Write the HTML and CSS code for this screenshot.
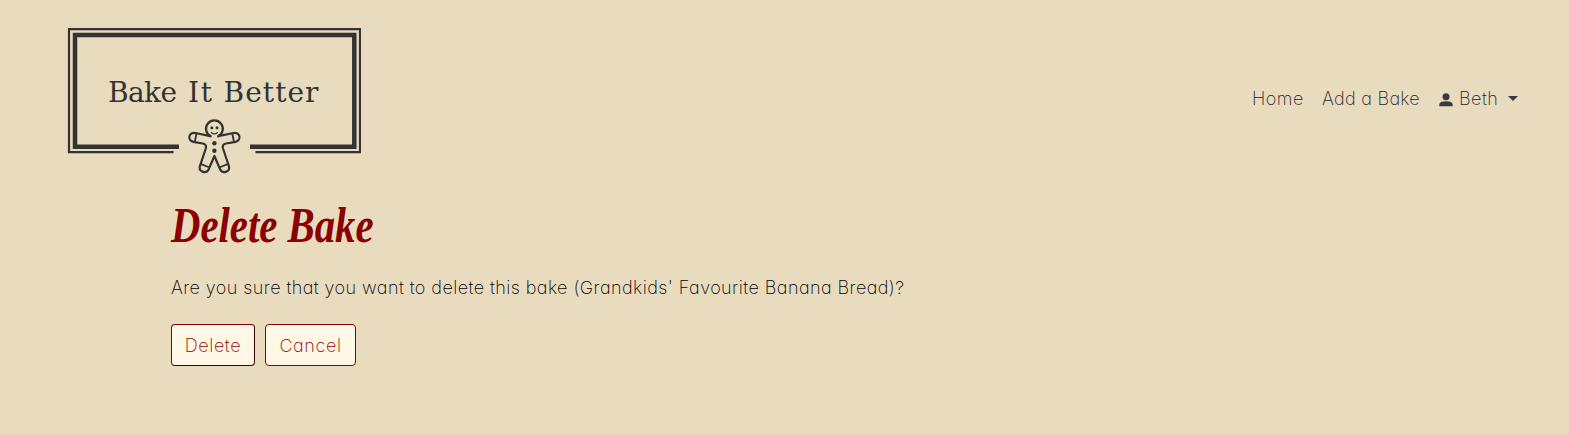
FILE: index.html
```html
<!DOCTYPE html>
<html lang="en">
<head>
<meta charset="utf-8">
<title>Bake It Better</title>
<link rel="stylesheet" href="styles.css">
</head>
<body>
<header class="navbar">
  <a class="brand" href="#" aria-label="Bake It Better">
    <svg class="logo" width="294" height="150" viewBox="67 27 294 150">
      <g fill="none" stroke="#333">
        <path stroke-width="2.200" d="M173.500 152.200H69V29.200H360V152.200H255.500"/>
        <path stroke-width="4.500" d="M179 146.700H75V35H354.300V146.700H250"/>
      </g>
      <g class="logo-text">
        <text x="108" y="101.500" textLength="69">Bake</text>
        <text x="188" y="101.500" textLength="24">It</text>
        <text x="223.500" y="101.500" textLength="95">Better</text>
      </g>
      <g fill="none" stroke="#333" stroke-width="2.200" stroke-linejoin="round" stroke-linecap="round">
        <path d="M210.500 136.200A8.400 8.400 0 1 1 218.300 136.200"/>
        <path d="M210.500 136.200L195.300 133C188.500 131.500 187 140.500 193.300 141.800L202.800 143.500C205.800 144 206.500 146 205.800 148.500L200.100 165.500C197.800 171.300 205.800 174.700 208.600 169.500L214.400 156L220.200 169.500C223 174.700 231 171.300 228.700 165.500L223 148.500C222.300 146 223 144 226 143.500L235.500 141.800C241.800 140.500 240.300 131.500 233.500 133L218.300 136.200"/>
        <path stroke-width="1.800" d="M196.500 133.500L194.900 141.500M232.300 133.500L233.900 141.500M201.200 164.200L208.300 167M227.600 164.200L220.500 167"/>
        <path stroke-width="1.100" d="M211.300 132.500Q214.400 135.200 217.500 132.500"/>
      </g>
      <g fill="#333">
        <circle cx="211.800" cy="127.700" r="1.500"/><circle cx="217" cy="127.700" r="1.500"/>
        <circle cx="214.400" cy="143.300" r="2.200"/><circle cx="214.400" cy="150.800" r="2.200"/>
      </g>
    </svg>
  </a>
  <nav class="nav">
    <a class="nav-link home" href="#">Home</a>
    <a class="nav-link add" href="#">Add a Bake</a>
    <a class="nav-link user" href="#">
      <svg class="person" width="14" height="14" viewBox="0 0 14 14" fill="#343a40"><circle cx="7" cy="3.800" r="3.500"/><path d="M0.300 13.300V11.700Q0.300 8.300 7 8.300T13.700 11.700V13.300Z"/></svg>
      <span class="name">Beth</span><span class="caret"></span>
    </a>
  </nav>
</header>
<main class="content">
  <h1 class="title">Delete Bake</h1>
  <p class="question">Are you sure that you want to delete this bake (Grandkids' Favourite Banana Bread)?</p>
  <div class="actions">
    <button class="btn btn-delete">Delete</button>
    <button class="btn btn-cancel">Cancel</button>
  </div>
</main>
</body>
</html>
```
FILE: styles.css
```css
* { box-sizing: border-box; }
body {
  margin: 0;
  background: #e8dbbe;
  color: #212529;
  font-family: Inter, "Open Sans", sans-serif;
  font-feature-settings: "cv11", "ss03";
  font-size: 18px;
  font-weight: 200;
  line-height: 27px;
}
.navbar {
  display: flex;
  align-items: center;
  justify-content: space-between;
  height: 195px;
  padding: 0 50px 0 67px;
}
.logo { display: block; margin-top: 9px; }
.logo-text {
  font-family: "DejaVu Serif", serif;
  font-size: 28px;
  font-weight: 400;
  fill: #333;
}
.nav { display: flex; gap: 18px; padding-top: 1px; }
.nav-link { color: #212529; text-decoration: none; white-space: nowrap; letter-spacing: .5px; }
.home { width: 52px; }
.add { width: 99px; letter-spacing: .3px; }
.user { display: flex; align-items: center; width: 80px; }
.person { margin-top: 3px; margin-right: 6px; }
.name { width: 40px; }
.caret {
  margin-left: 9px;
  border: 5px solid transparent;
  border-top-color: #343a40;
  border-bottom: 0;
}
.content { padding: 0 171px; }
.title {
  margin: 0;
  height: 60px;
  width: max-content;
  color: #8b0000;
  font: italic bold 50px/60px "Liberation Serif", serif;
  transform: scaleX(.815);
  transform-origin: left;
}
.question {
  margin: 19px 0 23px;
  color: #000;
  letter-spacing: .44px;
  white-space: nowrap;
}
.actions { display: flex; gap: 10px; }
.btn {
  height: 42px;
  padding: 0;
  border: 1px solid #8b0000;
  border-radius: 4px;
  background: #fff8e7;
  color: #8b0000;
  font: inherit;
  font-feature-settings: inherit;
  letter-spacing: .6px;
}
.btn-delete { width: 84px; border-color: #8b0000 #3d0000 #3d0000 #8b0000; }
.btn-cancel { width: 91px; }
```
